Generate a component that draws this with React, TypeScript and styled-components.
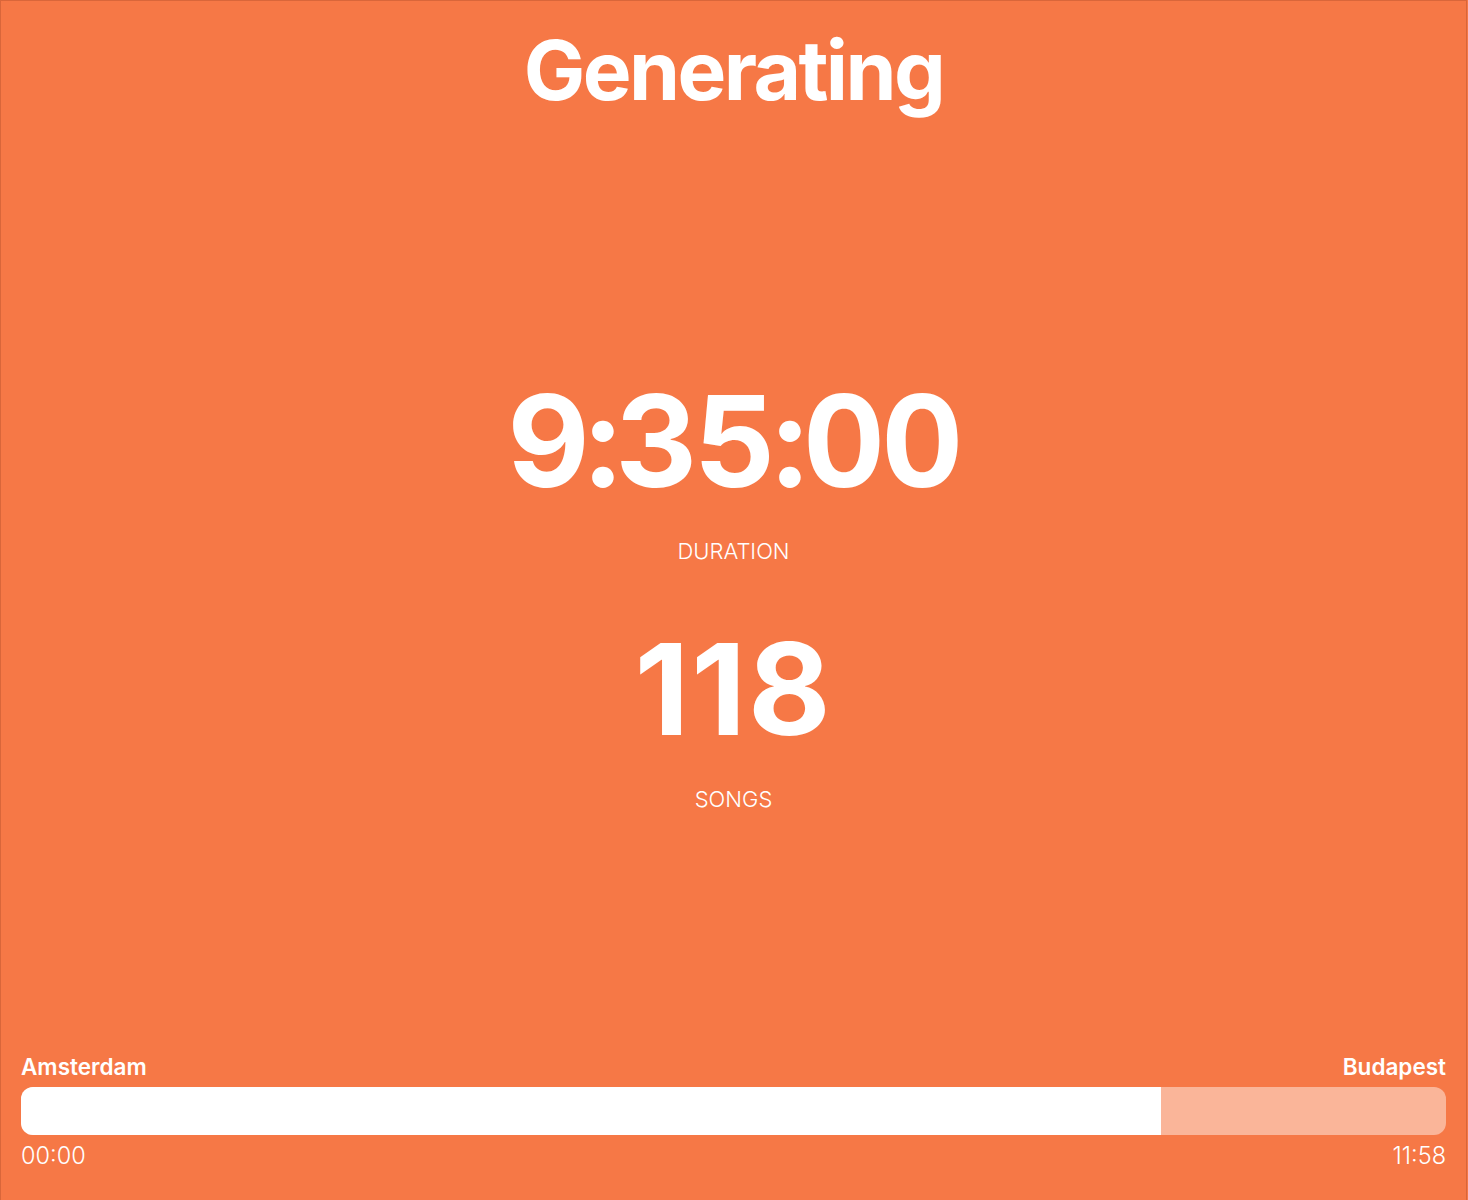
import React from "react";
import styled, { createGlobalStyle } from "styled-components";

const Global = createGlobalStyle`
  html, body { margin: 0; padding: 0; background: #f67846; }
  body { font-family: Inter, "Noto Sans", sans-serif; color: #ffffff; }
`;

const Page = styled.main`
  box-sizing: border-box;
  width: 1467px;
  height: 1200px;
  background: #f67846;
  border: 1px solid #d9663a;
  border-bottom: none;
  display: flex;
  flex-direction: column;
  align-items: stretch;
  padding: 29px 20px 0 20px;
`;

const Title = styled.h1`
  margin: 0;
  font-size: 82px;
  line-height: 1;
  font-weight: 700;
  letter-spacing: -2.6px;
  text-align: center;
`;

const Stats = styled.section`
  margin-top: 266px;
  display: flex;
  flex-direction: column;
  align-items: center;
`;

const BigValue = styled.div<{ $gap?: number; $tracking: number; $tabular?: boolean }>`
  margin-top: ${(p) => p.$gap ?? 0}px;
  font-size: 127px;
  line-height: 1;
  font-weight: 700;
  letter-spacing: ${(p) => p.$tracking}px;
  font-variant-numeric: ${(p) => (p.$tabular ? "tabular-nums" : "normal")};
`;

const Label = styled.div`
  margin-top: 35px;
  font-size: 22px;
  line-height: 1;
  font-weight: 300;
  text-transform: uppercase;
`;

const Footer = styled.footer`
  margin-top: auto;
  padding-bottom: 33px;
  display: flex;
  flex-direction: column;
`;

const Row = styled.div`
  display: flex;
  justify-content: space-between;
  line-height: 1;
`;

const City = styled.span`
  font-size: 22.5px;
  font-weight: 600;
`;

const Time = styled.span`
  font-size: 23.5px;
  font-weight: 300;
`;

const Track = styled.div`
  margin: 8px 0 9px;
  height: 48px;
  border-radius: 12px;
  background: rgba(255, 255, 255, 0.45);
  overflow: hidden;
  display: flex;
`;

const Fill = styled.div`
  height: 100%;
  background: #ffffff;
`;

export default function App() {
  const progress = (1162 - 20) / (1447 - 20);
  return (
    <>
      <Global />
      <Page>
        <Title>Generating</Title>
        <Stats>
          <BigValue $tracking={-3.8} $tabular>
            9:35:00
          </BigValue>
          <Label>Duration</Label>
          <BigValue $gap={64} $tracking={2}>
            118
          </BigValue>
          <Label>Songs</Label>
        </Stats>
        <Footer>
          <Row>
            <City>Amsterdam</City>
            <City>Budapest</City>
          </Row>
          <Track>
            <Fill style={{ width: `${progress * 100}%` }} />
          </Track>
          <Row>
            <Time>00:00</Time>
            <Time>11:58</Time>
          </Row>
        </Footer>
      </Page>
    </>
  );
}
